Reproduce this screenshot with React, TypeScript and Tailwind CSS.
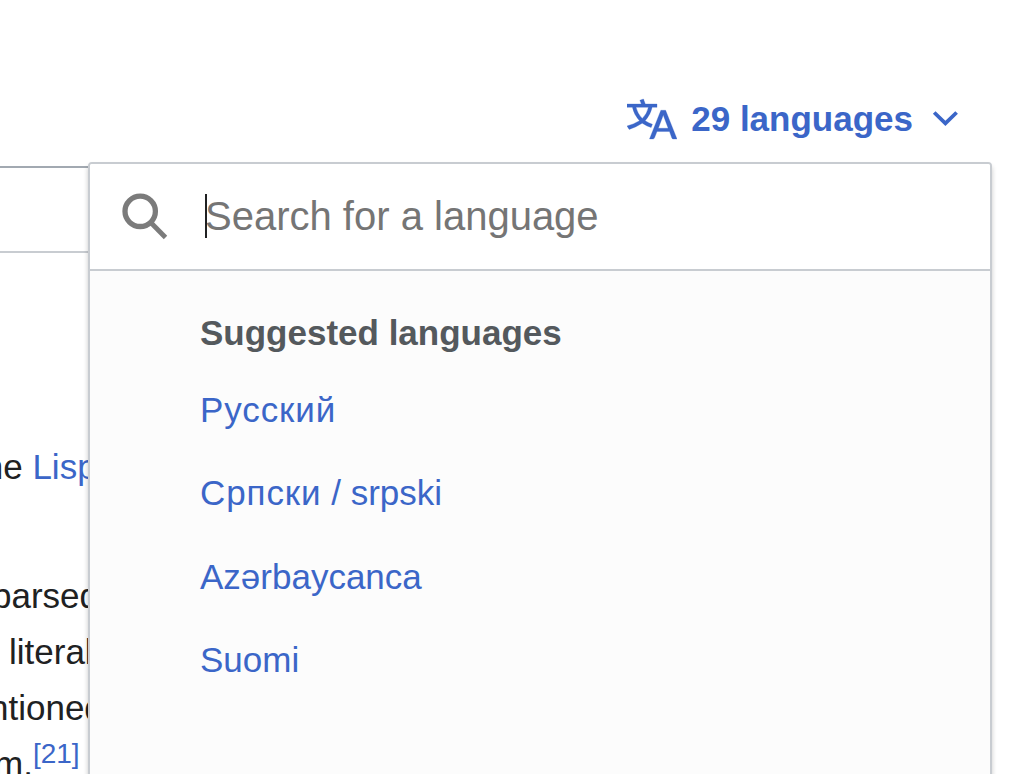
import type { ReactNode } from 'react';

const suggested = [
  { cyrillic: 'Русский', latin: '' },
  { cyrillic: 'Српски', latin: ' / srpski' },
  { cyrillic: '', latin: 'Azərbaycanca' },
  { cyrillic: '', latin: 'Suomi' },
];

function LanguageIcon() {
  return (
    <svg viewBox="0 0 20 20" className="size-[50px] shrink-0" fill="currentColor" stroke="currentColor" strokeWidth="0.12" aria-hidden="true">
      <path d="M20 18h-1.44a.6.6 0 0 1-.4-.12.8.8 0 0 1-.23-.31L17 15h-5l-1 2.54a.8.8 0 0 1-.22.3.6.6 0 0 1-.4.14H9l4.55-11.47h1.89zm-3.53-4.31L14.89 9.5a12 12 0 0 1-.39-1.24q-.09.37-.19.69l-.19.56-1.58 4.19zm-6.3-1.58a13.4 13.4 0 0 1-2.91-1.41 11.46 11.46 0 0 0 2.81-5.37H12V4H7.31a4 4 0 0 0-.2-.56C6.87 2.79 6.6 2 6.6 2l-1.47.5s.4.89.6 1.5H0v1.33h2.15A11.23 11.23 0 0 0 5 10.7a17.2 17.2 0 0 1-5 2.1q.56.82.87 1.38a23.3 23.3 0 0 0 5.22-2.51 15.6 15.6 0 0 0 3.56 1.77zM3.63 5.33h4.91a8.1 8.1 0 0 1-2.45 4.45 9.1 9.1 0 0 1-2.46-4.45" />
    </svg>
  );
}

function ExpandIcon() {
  return (
    <svg viewBox="0 0 30 30" className="size-[30px] shrink-0" fill="none" stroke="currentColor" strokeWidth="3.8" aria-hidden="true">
      <path d="M4.2 8.5L15.4 19.4L26.6 8.5" />
    </svg>
  );
}

function SearchIcon() {
  return (
    <svg viewBox="0 0 48 48" className="-mt-px size-12 shrink-0" fill="none" stroke="#7b7b7b" aria-hidden="true">
      <circle cx="20.2" cy="19.3" r="15.2" strokeWidth="5.3" />
      <path d="M30 29.7l15.5 15.8" strokeWidth="4.8" />
    </svg>
  );
}

function Line({ children }: { children: ReactNode }) {
  return <p className="h-14 whitespace-nowrap leading-[56px]">{children}</p>;
}

export default function App() {
  return (
    <div className="relative h-[774px] w-[1024px] overflow-hidden bg-white font-['Liberation_Sans',Arial,sans-serif] text-[35px] text-[#202122]">
      <header className="mr-[64px] flex h-[168px] items-start justify-end border-b-2 border-[#a2a9b1] pt-[91px]">
        <button className="flex h-14 items-center font-bold text-[#3b66c8]">
          <LanguageIcon />
          <span className="ml-[14px] mr-[17px] leading-[56px]">29 languages</span>
          <ExpandIcon />
        </button>
      </header>
      <div className="mr-[64px] h-[85px] border-b-2 border-[#c8ccd1]" />
      <main className="pt-[186px]">
        <div className="-ml-[26px]">
          <Line>the <span className="text-[#3b66c8]">Lisp</span></Line>
        </div>
        <div className="-ml-[8px] mt-[73px]">
          <Line>parsed</Line>
        </div>
        <div className="ml-[9px]">
          <Line>literal</Line>
        </div>
        <div className="-ml-[11px]">
          <Line>ntioned</Line>
        </div>
        <div className="-ml-[6px] flex">
          <Line>m.</Line>
          <span className="-mt-[10px] text-[28px] leading-[56px] text-[#3b66c8]">[21]</span>
        </div>
      </main>

      <section className="absolute left-[88px] top-[162px] h-[640px] w-[904px] rounded-[4px] border-2 border-[#c8ccd1] bg-[#fcfcfc] shadow-[0_4px_5px_rgba(0,0,0,0.22)]">
        <div className="flex h-[107px] items-center rounded-t-[2px] border-b-2 border-[#c8ccd1] bg-white pl-[30px]">
          <SearchIcon />
          <div className="relative -mt-[2px] ml-[37px] text-[40px] leading-[46px] text-[#757575]">
            Search for a language
            <span className="absolute left-0 top-[1px] h-[44px] w-[2px] bg-[#202122]" />
          </div>
        </div>
        <div className="pl-[110px] pt-[34px]">
          <h3 className="font-bold leading-[56px] text-[#54595d]">Suggested languages</h3>
          <ul className="mt-[7px] text-[#3b66c8]">
            {suggested.map(({ cyrillic, latin }) => (
              <li key={cyrillic + latin} className="leading-[83.3px]">
                <span className="tracking-[0.9px]">{cyrillic}</span>
                {latin}
              </li>
            ))}
          </ul>
        </div>
      </section>
    </div>
  );
}
